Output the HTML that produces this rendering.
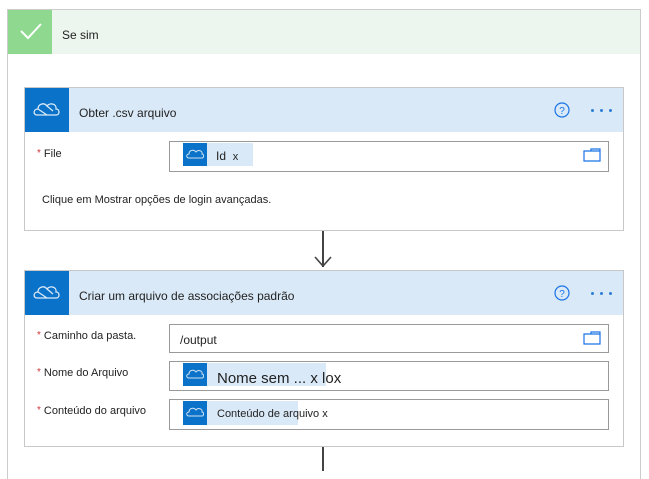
<!DOCTYPE html><html><head><style>
body{margin:0;width:649px;height:471px;background:#fff;font-family:"Liberation Sans",sans-serif;position:relative;overflow:hidden;color:#222}
.a{position:absolute;box-sizing:border-box}
.t{font-size:12px;white-space:nowrap}
.lbl{font-size:11px;color:#222}
.lbl b{color:#d13438;font-weight:normal;font-size:10px;vertical-align:top;margin-right:3px}
.inp{border:1px solid #999;background:#fff}
.d{display:inline-block;width:3px;height:3px;background:#2b7fd4;border-radius:2px;margin-right:6px}
</style></head><body>
<div class="a" style="left:7px;top:9px;width:634px;height:470px;border:1px solid #ccc;border-bottom:none"></div>
<div class="a" style="left:8px;top:10px;width:632px;height:44px;background:#edf6ee"></div>
<div class="a" style="left:8px;top:10px;width:44px;height:44px;background:#8ed98f"></div>
<svg class="a" style="left:19px;top:22px" width="24" height="18"><path d="M2 9 L9 16 L22 2" stroke="#fff" stroke-width="2" fill="none"/></svg>
<div class="a t" style="left:62px;top:28px">Se sim</div>

<!-- card1 -->
<div class="a" style="left:24px;top:87px;width:600px;height:144px;border:1px solid #c8c8c8"></div>
<div class="a" style="left:25px;top:88px;width:598px;height:44px;background:#d9e9f7"></div>
<div class="a" style="left:25px;top:88px;width:44px;height:44px;background:#0a72c9"></div>
<svg class="a" style="left:33px;top:99px" width="28" height="20"><path d="M4 16 C0 16 0 10 5 10 C5 5 11 3 14 7 C17 3 24 5 23 10 C27 10 27 16 23 16 Z M5 10 L14 16 M14 7 L20 12" stroke="#fff" stroke-width="1.3" fill="none" opacity="0.85"/></svg>
<div class="a t" style="left:79px;top:106px">Obter .csv arquivo</div>
<svg class="a" style="left:553px;top:101px" width="18" height="18"><circle cx="9" cy="9" r="7" stroke="#1a73e8" fill="none" stroke-width="1.2"/><text x="9" y="13" font-size="10" text-anchor="middle" fill="#1a73e8" font-family="Liberation Sans">?</text></svg>
<div class="a" style="left:591px;top:109px;font-size:0"><span class="d"></span><span class="d"></span><span class="d"></span></div>
<div class="a lbl" style="left:37px;top:148px"><b>*</b>File</div>
<div class="a inp" style="left:169px;top:141px;width:440px;height:31px"></div>
<div class="a" style="left:183px;top:143px;width:70px;height:23px;background:#d9e9f7"></div>
<div class="a" style="left:183px;top:143px;width:24px;height:23px;background:#0a72c9"></div>
<div class="a t" style="left:216px;top:149px">Id &nbsp;<span style="font-size:11px">x</span></div>
<div class="a" style="left:42px;top:194px;font-size:11px;white-space:nowrap">Clique em Mostrar opções de login avançadas.</div>
<svg class="a" style="left:583px;top:148px" width="18" height="14"><path d="M1 3 H17 V13 H1 Z M8 3 V1 H17 V3" stroke="#1a73e8" fill="none" stroke-width="1.2"/></svg>

<div class="a" style="left:322px;top:231px;width:2px;height:36px;background:#444"></div>
<svg class="a" style="left:314px;top:256px" width="18" height="12"><path d="M1 1 L9 10 L17 1" stroke="#444" stroke-width="1.6" fill="none"/></svg>

<!-- card2 -->
<div class="a" style="left:24px;top:270px;width:600px;height:177px;border:1px solid #c8c8c8"></div>
<div class="a" style="left:25px;top:271px;width:598px;height:44px;background:#d9e9f7"></div>
<div class="a" style="left:25px;top:271px;width:44px;height:44px;background:#0a72c9"></div>
<svg class="a" style="left:33px;top:282px" width="28" height="20"><path d="M4 16 C0 16 0 10 5 10 C5 5 11 3 14 7 C17 3 24 5 23 10 C27 10 27 16 23 16 Z M5 10 L14 16 M14 7 L20 12" stroke="#fff" stroke-width="1.3" fill="none" opacity="0.85"/></svg>
<div class="a t" style="left:79px;top:289px">Criar um arquivo de associações padrão</div>
<svg class="a" style="left:553px;top:284px" width="18" height="18"><circle cx="9" cy="9" r="7" stroke="#1a73e8" fill="none" stroke-width="1.2"/><text x="9" y="13" font-size="10" text-anchor="middle" fill="#1a73e8" font-family="Liberation Sans">?</text></svg>
<div class="a" style="left:591px;top:292px;font-size:0"><span class="d"></span><span class="d"></span><span class="d"></span></div>

<div class="a lbl" style="left:37px;top:330px"><b>*</b>Caminho da pasta.</div>
<div class="a inp" style="left:169px;top:324px;width:440px;height:29px"></div>
<div class="a t" style="left:180px;top:333px">/output</div>
<svg class="a" style="left:583px;top:331px" width="18" height="14"><path d="M1 3 H17 V13 H1 Z M8 3 V1 H17 V3" stroke="#1a73e8" fill="none" stroke-width="1.2"/></svg>

<div class="a lbl" style="left:37px;top:367px"><b>*</b>Nome do Arquivo</div>
<div class="a inp" style="left:169px;top:361px;width:440px;height:30px"></div>
<div class="a" style="left:207px;top:363px;width:119px;height:23px;background:#d9e9f7"></div>
<div class="a" style="left:183px;top:363px;width:24px;height:23px;background:#0a72c9"></div>
<div class="a" style="left:217px;top:370px;font-size:15px;white-space:nowrap">Nome sem ... x lox</div>

<div class="a lbl" style="left:37px;top:405px"><b>*</b>Conteúdo do arquivo</div>
<div class="a inp" style="left:169px;top:399px;width:440px;height:31px"></div>
<div class="a" style="left:183px;top:401px;width:115px;height:24px;background:#d9e9f7"></div>
<div class="a" style="left:183px;top:401px;width:24px;height:24px;background:#0a72c9"></div>
<div class="a" style="left:217px;top:408px;font-size:11px;white-space:nowrap">Conteúdo de arquivo x</div>

<div class="a" style="left:322px;top:447px;width:2px;height:24px;background:#444"></div>
<svg class="a" style="left:186px;top:147px" width="18" height="14"><path d="M3 11 C0 11 0 7 3 7 C3 3 8 2 10 5 C12 2 17 4 16 7 C18 7 18 11 16 11 Z" stroke="#fff" stroke-width="1" fill="none" opacity="0.8"/></svg>
<svg class="a" style="left:186px;top:367px" width="18" height="14"><path d="M3 11 C0 11 0 7 3 7 C3 3 8 2 10 5 C12 2 17 4 16 7 C18 7 18 11 16 11 Z" stroke="#fff" stroke-width="1" fill="none" opacity="0.8"/></svg>
<svg class="a" style="left:186px;top:405px" width="18" height="14"><path d="M3 11 C0 11 0 7 3 7 C3 3 8 2 10 5 C12 2 17 4 16 7 C18 7 18 11 16 11 Z" stroke="#fff" stroke-width="1" fill="none" opacity="0.8"/></svg>
</body></html>
